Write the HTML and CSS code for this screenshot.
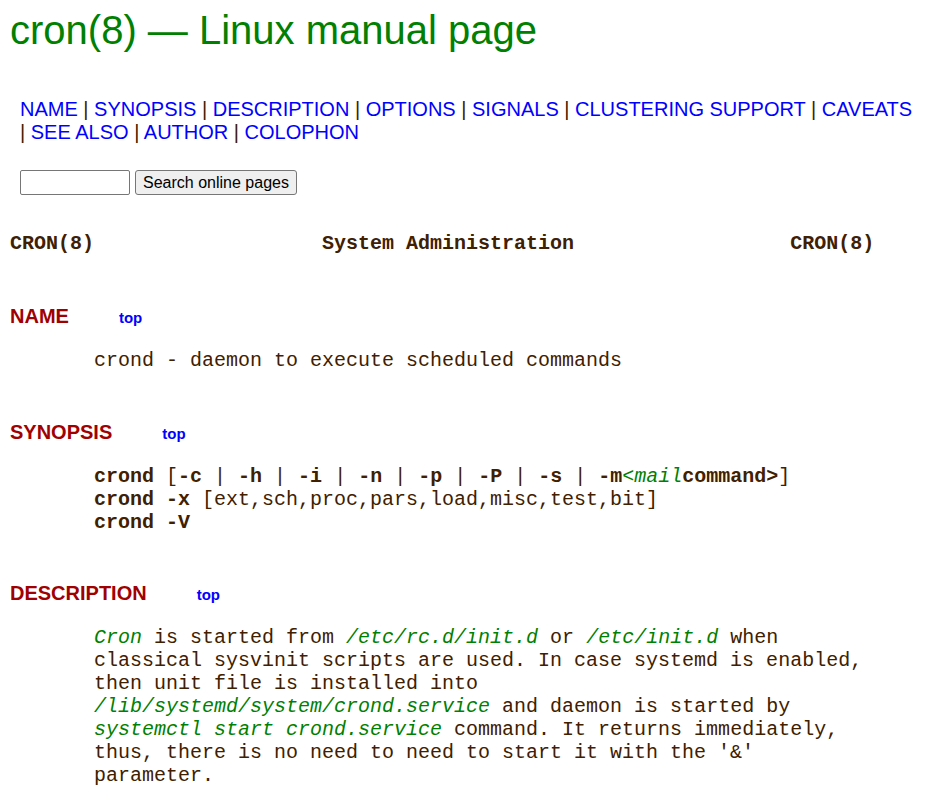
FILE: index.html
```html
<!DOCTYPE html>
<html lang="en">
<head>
<meta charset="utf-8">
<title>cron(8) - Linux manual page</title>
<link rel="stylesheet" href="styles.css">
</head>
<body>
<div class="page">
<h1 class="title">cron(8) — Linux manual page</h1>
<nav class="sec-nav"><a href="#NAME">NAME</a> | <a href="#SYNOPSIS">SYNOPSIS</a> | <a href="#DESCRIPTION">DESCRIPTION</a> | <a href="#OPTIONS">OPTIONS</a> | <a href="#SIGNALS">SIGNALS</a> | <a href="#CLUSTERING">CLUSTERING SUPPORT</a> | <a href="#CAVEATS">CAVEATS</a> | <a href="#SEE_ALSO">SEE ALSO</a> | <a href="#AUTHOR">AUTHOR</a> | <a href="#COLOPHON">COLOPHON</a></nav>
<form class="search" onsubmit="return false;"><input class="search-input" type="text" aria-label="Search"><button class="search-btn" type="button">Search online pages</button></form>
<pre class="man-head"><b>CRON(8)</b>                   <b>System Administration</b>                  <b>CRON(8)</b></pre>
<h2 class="sec" id="NAME"><span>NAME</span><a class="top-link" href="#">top</a></h2>
<pre class="man-body">       crond - daemon to execute scheduled commands</pre>
<h2 class="sec" id="SYNOPSIS"><span>SYNOPSIS</span><a class="top-link" href="#">top</a></h2>
<pre class="man-body">       <b>crond</b> [<b>-c</b> | <b>-h</b> | <b>-i</b> | <b>-n</b> | <b>-p</b> | <b>-P</b> | <b>-s</b> | <b>-m</b><i>&lt;mail</i><b>command&gt;</b>]
       <b>crond -x </b>[ext,sch,proc,pars,load,misc,test,bit]
       <b>crond -V</b></pre>
<h2 class="sec" id="DESCRIPTION"><span>DESCRIPTION</span><a class="top-link" href="#">top</a></h2>
<pre class="man-body">       <i>Cron</i> is started from <i>/etc/rc.d/init.d</i> or <i>/etc/init.d</i> when
       classical sysvinit scripts are used. In case systemd is enabled,
       then unit file is installed into
       <i>/lib/systemd/system/crond.service</i> and daemon is started by
       <i>systemctl start crond.service</i> command. It returns immediately,
       thus, there is no need to need to start it with the '&amp;'
       parameter.</pre>
</div>
</body>
</html>
```
FILE: styles.css
```css
html, body {
  margin: 0;
  padding: 0;
  background: #ffffff;
}
body {
  color: #402000;
  font-family: "Liberation Sans", Arial, sans-serif;
  font-size: 20px;
}
.page {
  padding: 0 10px;
}
.title {
  margin: 7px 0 0;
  font-size: 40px;
  line-height: 46px;
  font-weight: normal;
  color: #008000;
}
.sec-nav {
  margin: 45px 0 0 10px;
  width: 898px;
  font-size: 20px;
  line-height: 23px;
}
.sec-nav a, .top-link {
  color: #0000ff;
  text-decoration: none;
}
.search {
  display: flex;
  gap: 5px;
  margin: 26px 0 0 10px;
}
.search-input {
  box-sizing: border-box;
  width: 110px;
  height: 25px;
  margin: 0;
  border: 1px solid #767676;
  border-radius: 2px;
  background: #fff;
}
.search-btn {
  box-sizing: border-box;
  width: 162px;
  height: 25px;
  margin: 0;
  padding: 0 6px;
  border: 1px solid #767676;
  border-radius: 3px;
  background: #efefef;
  color: #000;
  font-family: "Liberation Sans", Arial, sans-serif;
  font-size: 16px;
  line-height: 23px;
}
pre {
  font-family: "Liberation Mono", "Courier New", monospace;
  font-size: 20px;
  line-height: 23px;
  margin: 0;
}
pre b {
  color: #402000;
}
pre i {
  color: #008000;
}
.man-head {
  margin-top: 37px;
}
.sec {
  margin: 50px 0 0;
  font-size: 20px;
  line-height: 23px;
  font-weight: bold;
  color: #a00000;
}
.sec + .man-body {
  margin-top: 20px;
}
.man-body + .sec {
  margin-top: 48.5px;
}
.top-link {
  margin-left: 50px;
  font-size: 15px;
}
```
